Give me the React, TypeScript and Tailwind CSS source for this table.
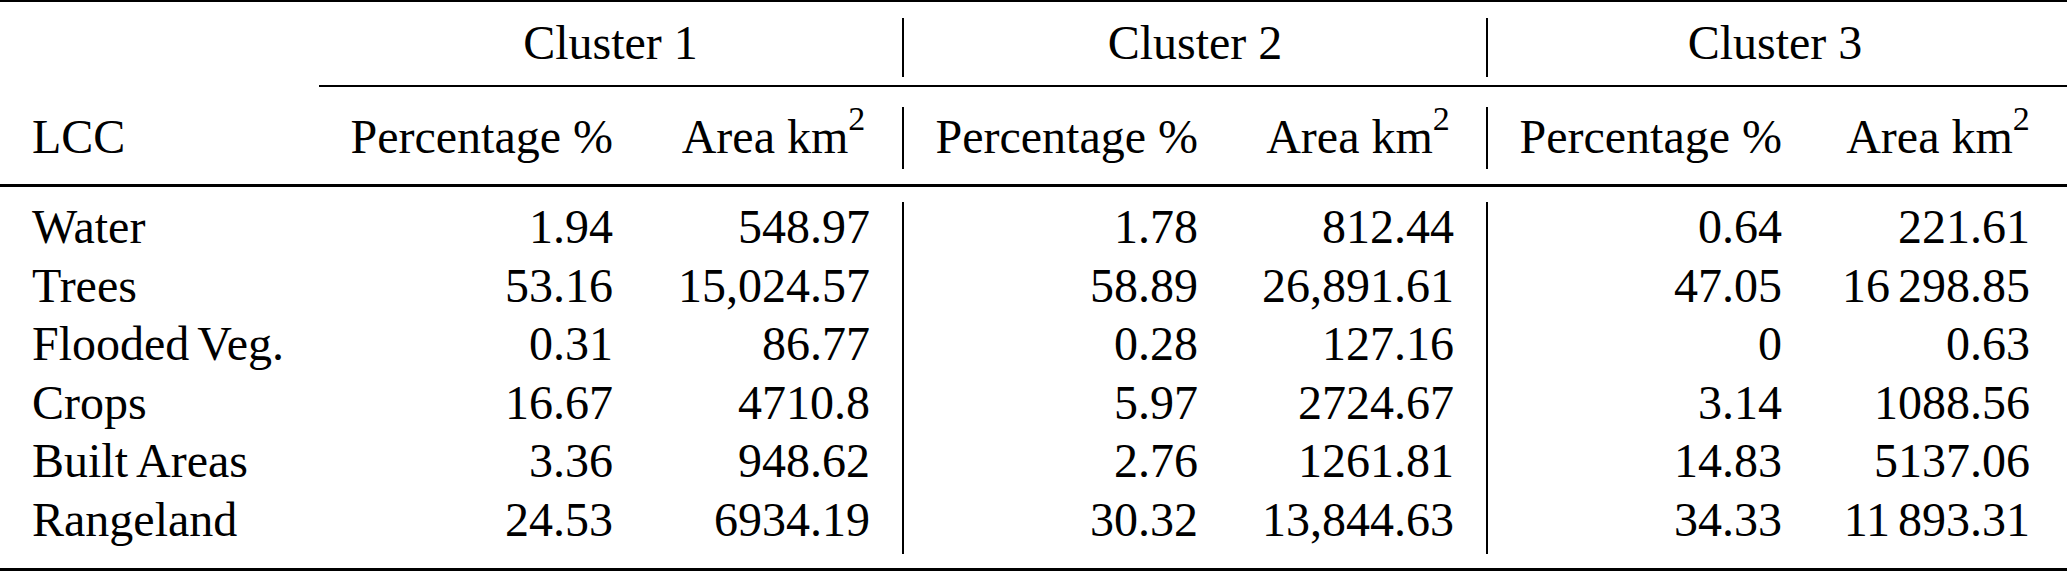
import React from "react";

const GRID = "grid grid-cols-[319px_326px_257px_328px_256px_328px_253px]";

type Row = [string, string, string, string, string, string, string];

const rows: Row[] = [
  ["Water", "1.94", "548.97", "1.78", "812.44", "0.64", "221.61"],
  ["Trees", "53.16", "15,024.57", "58.89", "26,891.61", "47.05", "16 298.85"],
  ["Flooded Veg.", "0.31", "86.77", "0.28", "127.16", "0", "0.63"],
  ["Crops", "16.67", "4710.8", "5.97", "2724.67", "3.14", "1088.56"],
  ["Built Areas", "3.36", "948.62", "2.76", "1261.81", "14.83", "5137.06"],
  ["Rangeland", "24.53", "6934.19", "30.32", "13,844.63", "34.33", "11 893.31"],
];

function Num({ v }: { v: string }) {
  if (v.includes(" ")) {
    const [a, b] = v.split(" ");
    return (
      <>
        {a}
        <span className="inline-block w-[8px]"></span>
        {b}
      </>
    );
  }
  return <>{v}</>;
}

function AreaHead() {
  return (
    <>
      Area km<sup className="text-[34px] -top-[23px]">2</sup>
    </>
  );
}

const dataCell = "leading-[49.6px] pb-[9px] whitespace-nowrap";
const dataCls = [
  "pl-8 text-left",
  "pr-8 text-right",
  "pr-8 text-right",
  "border-l-2 border-black pr-8 text-right",
  "pr-8 text-right",
  "border-l-2 border-black pr-8 text-right",
  "pr-[37px] text-right",
];

export default function App() {
  return (
    <div className="font-serif">
      <div className="w-[2067px] h-[571px] overflow-hidden bg-white text-black font-['Liberation_Serif'] text-[48px]">
        {/* top rule */}
        <div className="h-[2px] bg-black" />
        <div className="h-[16px]" />

        {/* cluster header */}
        <div className={GRID}>
          <div className="leading-[49.6px] pb-[9px]" />
          <div className="col-span-2 text-center leading-[49.6px] pb-[9px] whitespace-nowrap">Cluster 1</div>
          <div className="col-span-2 border-l-2 border-black text-center leading-[49.6px] pb-[9px] whitespace-nowrap">
            Cluster 2
          </div>
          <div className="col-span-2 border-l-2 border-black pr-[5px] text-center leading-[49.6px] pb-[9px] whitespace-nowrap">
            Cluster 3
          </div>
        </div>

        <div className="h-[8px]" />
        {/* cmidrule */}
        <div className="ml-[319px] h-[2px] bg-black" />
        <div className="h-[20.4px]" />

        {/* column header */}
        <div className={GRID}>
          <div className="pl-8 text-left leading-[59.6px] pb-[2.4px] whitespace-nowrap">LCC</div>
          <div className="pr-8 text-right leading-[59.6px] pb-[2.4px] whitespace-nowrap">Percentage %</div>
          <div className="px-8 text-center leading-[59.6px] pb-[2.4px] whitespace-nowrap">
            <AreaHead />
          </div>
          <div className="border-l-2 border-black pr-8 text-right leading-[59.6px] pb-[2.4px] whitespace-nowrap">
            Percentage %
          </div>
          <div className="px-8 text-center leading-[59.6px] pb-[2.4px] whitespace-nowrap">
            <AreaHead />
          </div>
          <div className="border-l-2 border-black pr-8 text-right leading-[59.6px] pb-[2.4px] whitespace-nowrap">
            Percentage %
          </div>
          <div className="pl-8 pr-[37px] text-center leading-[59.6px] pb-[2.4px] whitespace-nowrap">
            <AreaHead />
          </div>
        </div>

        <div className="h-[15px]" />
        {/* midrule */}
        <div className="h-[3px] bg-black" />
        <div className="h-[15px]" />

        {/* body */}
        <div className={GRID}>
          {rows.map((r, i) =>
            r.map((v, j) => (
              <div key={`${i}-${j}`} className={`${dataCell} ${dataCls[j]}`}>
                <Num v={v} />
              </div>
            ))
          )}
        </div>

        <div className="h-[14.4px]" />
        {/* bottom rule */}
        <div className="h-[3px] bg-black" />
      </div>
    </div>
  );
}
